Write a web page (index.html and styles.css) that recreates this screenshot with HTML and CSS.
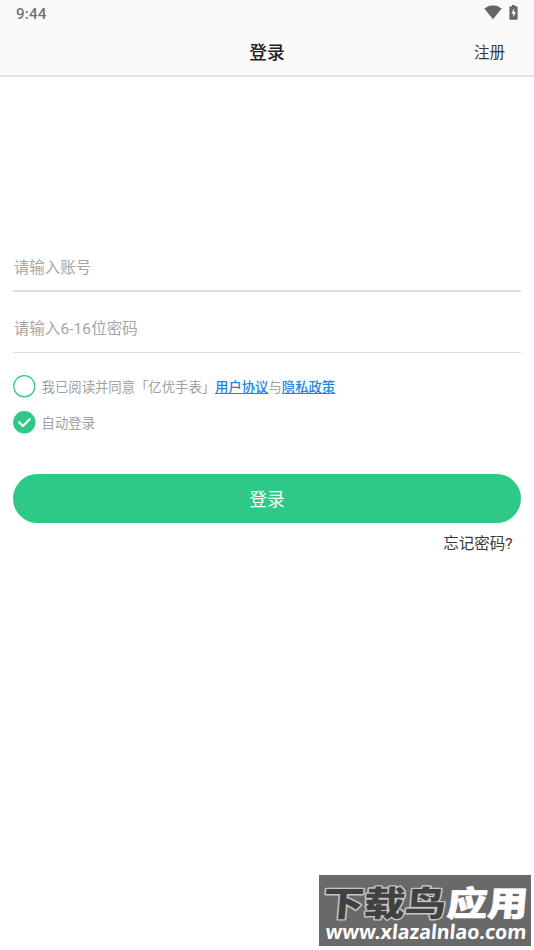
FILE: index.html
```html
<!DOCTYPE html>
<html lang="zh-CN">
<head>
<meta charset="utf-8">
<title>登录</title>
<link rel="stylesheet" href="styles.css">
</head>
<body>
<header class="top">
  <div class="status">
    <span class="time">9:44</span>
    <span class="status-icons">
      <svg width="18" height="15" viewBox="0 0 18 15"><path d="M.3 3.5Q9-2.8 17.7 3.5L9 14.2Z"/></svg>
      <svg width="9" height="15" viewBox="0 0 9 15"><path d="M3 0h3v1.3h1.6q1 0 1 1v11.4q0 1-1 1H1.4q-1 0-1-1V2.3q0-1 1-1H3Z"/><path class="bolt" d="M5.2 3.3 2.2 8.5h1.9v4L6.9 7H5.2Z"/></svg>
    </span>
  </div>
  <nav class="nav">
    <h1 class="title">登录</h1>
    <a class="register">注册</a>
  </nav>
</header>
<main class="form">
  <input class="field" type="text" placeholder="请输入账号">
  <input class="field second" type="password" placeholder="请输入6-16位密码">
  <div class="option agree">
    <svg class="check" width="23" height="23" viewBox="0 0 23 23"><circle class="ring" cx="11.3" cy="11.3" r="10.6"/></svg>
    <span class="label">我已阅读并同意「亿优手表」<a class="link">用户协议</a>与<a class="link">隐私政策</a></span>
  </div>
  <div class="option auto">
    <svg class="check" width="23" height="23" viewBox="0 0 23 23"><circle class="disc" cx="11.3" cy="11.3" r="11.2"/><path class="tick" d="M6.2 11.4 10 15l6.6-6.8"/></svg>
    <span class="label">自动登录</span>
  </div>
  <button class="submit">登录</button>
  <a class="forgot">忘记密码?</a>
</main>
<aside class="watermark">
  <svg width="212" height="71" viewBox="0 0 212 71">
    <g transform="translate(3 41) skewX(-5)">
      <text class="mark dark" x="0" y="0" textLength="123" lengthAdjust="spacingAndGlyphs">下载鸟</text>
      <text class="mark light" x="124" y="0" textLength="81" lengthAdjust="spacingAndGlyphs">应用</text>
    </g>
    <g transform="translate(6 64) skewX(-5)">
      <text class="site" x="0" y="0" textLength="201" lengthAdjust="spacingAndGlyphs">www.xlazalnlao.com</text>
    </g>
  </svg>
</aside>
</body>
</html>
```
FILE: styles.css
```css
* { box-sizing: border-box; }
body {
  margin: 0;
  height: 950px;
  overflow: hidden;
  background: #fff;
  font-family: Roboto, "Noto Sans CJK SC", sans-serif;
}
.top {
  height: 77px;
  background: #fafafa;
  border-bottom: 2px solid #e2e2e2;
}
.status {
  height: 28px;
  padding: 0 16px;
  display: flex;
  align-items: center;
  justify-content: space-between;
}
.time { font-size: 15.2px; font-weight: 500; letter-spacing: .2px; color: #757575; }
.status-icons { display: flex; gap: 7px; margin-top: -3px; fill: #666; }
.status-icons .bolt { fill: #fafafa; }
.nav {
  height: 45px;
  display: grid;
  grid-template-columns: 1fr auto 1fr;
  align-items: center;
}
.title { grid-column: 2; margin: 0; font-size: 17.8px; font-weight: 500; color: #222; }
.register { justify-self: end; margin-right: 29px; font-size: 15.5px; color: #3a3a3a; }
.form {
  padding: 165px 13px 0;
  display: flex;
  flex-direction: column;
}
.field {
  width: 100%;
  height: 50px;
  padding: 4px 0 0 .7px;
  border: 0;
  border-bottom: 2px solid #dedede;
  border-radius: 0;
  outline: 0;
  background: none;
  font: 15.5px Roboto, "Noto Sans CJK SC", sans-serif;
}
.field::placeholder { color: #a6a6a6; opacity: 1; }
.second { margin-top: 11px; padding-top: 3px; border-bottom-width: 1px; letter-spacing: .08px; }
.option {
  height: 23px;
  display: flex;
  align-items: center;
  gap: 5.6px;
  font-size: 13.35px;
  line-height: 20px;
  color: #a0a0a0;
}
.agree { margin-top: 22px; }
.auto { margin-top: 13px; }
.label { padding-top: 2px; }
.check { fill: none; }
.ring { stroke: #2fc987; stroke-width: 1.2; }
.disc { fill: #2fc987; }
.tick { stroke: #fff; stroke-width: 2.3; stroke-linecap: round; stroke-linejoin: round; }
.link { color: #2484e6; font-weight: 500; text-decoration: underline; }
.submit {
  height: 49px;
  margin-top: 39.5px;
  padding: 0 0 1px;
  border: 0;
  border-radius: 25px;
  background: #2fc987;
  color: #fff;
  font: 17.8px Roboto, "Noto Sans CJK SC", sans-serif;
}
.forgot {
  align-self: flex-end;
  margin: 10.5px 8.5px 0 0;
  font-size: 15.5px;
  line-height: 23px;
  color: #3a3a3a;
}
.watermark {
  position: absolute;
  left: 319px;
  top: 875px;
  width: 212px;
  height: 71px;
  background: #696969;
}
.watermark svg { display: block; }
.mark {
  font: 900 34.5px "Noto Sans CJK SC", sans-serif;
  paint-order: stroke;
  stroke-linejoin: round;
}
.dark { fill: #414141; stroke: #c4c4c4; stroke-width: 2.8; }
.light { fill: #fff; stroke: #fff; stroke-width: .6; }
.site {
  font: 700 20px "Noto Sans", sans-serif;
  fill: #fff;
}
```
